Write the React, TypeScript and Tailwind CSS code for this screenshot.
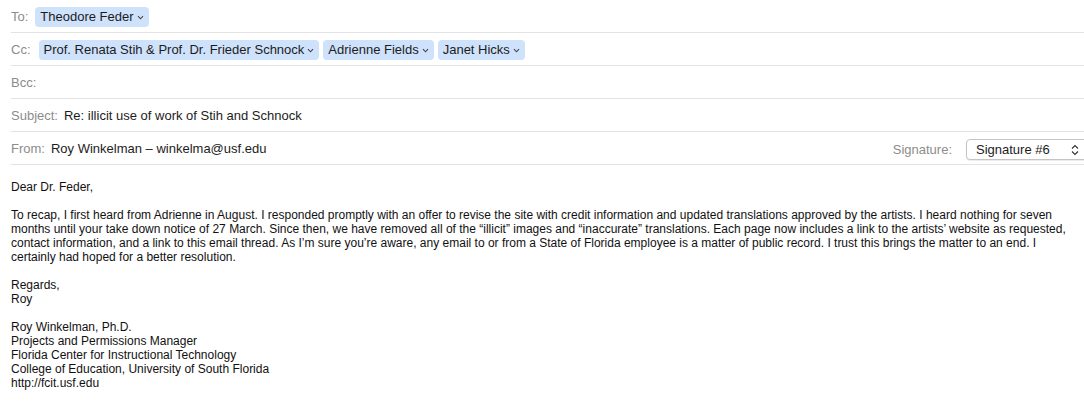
const Chevron = () => (
  <svg width="7" height="5" viewBox="0 0 7 5" className="ml-[3px] mt-[2px]">
    <path d="M1 1.2 L3.5 3.8 L6 1.2" fill="none" stroke="#444" strokeWidth="1.1" />
  </svg>
);

const Chip = ({ name }: { name: string }) => (
  <span className="flex items-center h-[20px] px-[5px] rounded-[4px] bg-[#cfe2fb] text-[#1c1c1c]">
    {name}
    <Chevron />
  </span>
);

const Row = ({ label, children }: { label: string; children?: React.ReactNode }) => (
  <div className="ml-[11px] h-[33px] pt-[1px] border-b border-[#e3e3e3] flex items-center gap-[6px]">
    <span className="text-[#8c8c8c]">{label}</span>
    {children}
  </div>
);

const App = () => {
  return (
    <div
      className="w-[1084px] h-[412px] bg-white overflow-hidden text-[13px]"
      style={{ fontFamily: '"Liberation Sans", Arial, sans-serif' }}
    >
      <Row label="To:">
        <div className="ml-[1px]">
          <Chip name="Theodore Feder" />
        </div>
      </Row>
      <Row label="Cc:">
        <div className="flex items-center gap-[4px] ml-[2px]">
          <Chip name="Prof. Renata Stih & Prof. Dr. Frieder Schnock" />
          <Chip name="Adrienne Fields" />
          <Chip name="Janet Hicks" />
        </div>
      </Row>
      <Row label="Bcc:" />
      <Row label="Subject:">
        <span className="text-[#1c1c1c]">Re: illicit use of work of Stih and Schnock</span>
      </Row>
      <Row label="From:">
        <span className="text-[#1c1c1c]">Roy Winkelman – winkelma@usf.edu</span>
        <div className="ml-auto -mr-[8px] mt-[2px] flex items-center gap-[14px]">
          <span className="text-[#8c8c8c]">Signature:</span>
          <div className="w-[126px] h-[21px] rounded-[4px] border border-[#c4c4c4] bg-white flex items-center pl-[9px] pr-[12px] text-[#1c1c1c] shadow-[0_1px_1px_rgba(0,0,0,0.08)]">
            <span>Signature #6</span>
            <svg width="8" height="12" viewBox="0 0 8 12" className="ml-auto">
              <path d="M1 4.5 L4 1.5 L7 4.5 M1 7.5 L4 10.5 L7 7.5" fill="none" stroke="#333" strokeWidth="1.1" />
            </svg>
          </div>
        </div>
      </Row>

      <div className="pl-[11px] pr-[10px] pt-[15px] text-[12px] leading-[14px] text-[#111]">
        <p>Dear Dr. Feder,</p>
        <p className="mt-[14px]">
          To recap, I first heard from Adrienne in August. I responded promptly with an offer to revise the site with credit information and updated translations approved by the artists. I heard nothing for seven months until your take down notice of 27 March. Since then, we have removed all of the “illicit” images and “inaccurate” translations. Each page now includes a link to the artists’ website as requested, contact information, and a link to this email thread. As I’m sure you’re aware, any email to or from a State of Florida employee is a matter of public record. I trust this brings the matter to an end. I certainly had hoped for a better resolution.
        </p>
        <p className="mt-[14px]">
          Regards,
          <br />
          Roy
        </p>
        <p className="mt-[14px]">
          Roy Winkelman, Ph.D.
          <br />
          Projects and Permissions Manager
          <br />
          Florida Center for Instructional Technology
          <br />
          College of Education, University of South Florida
          <br />
          http://fcit.usf.edu
        </p>
      </div>
    </div>
  );
};

export default App;
